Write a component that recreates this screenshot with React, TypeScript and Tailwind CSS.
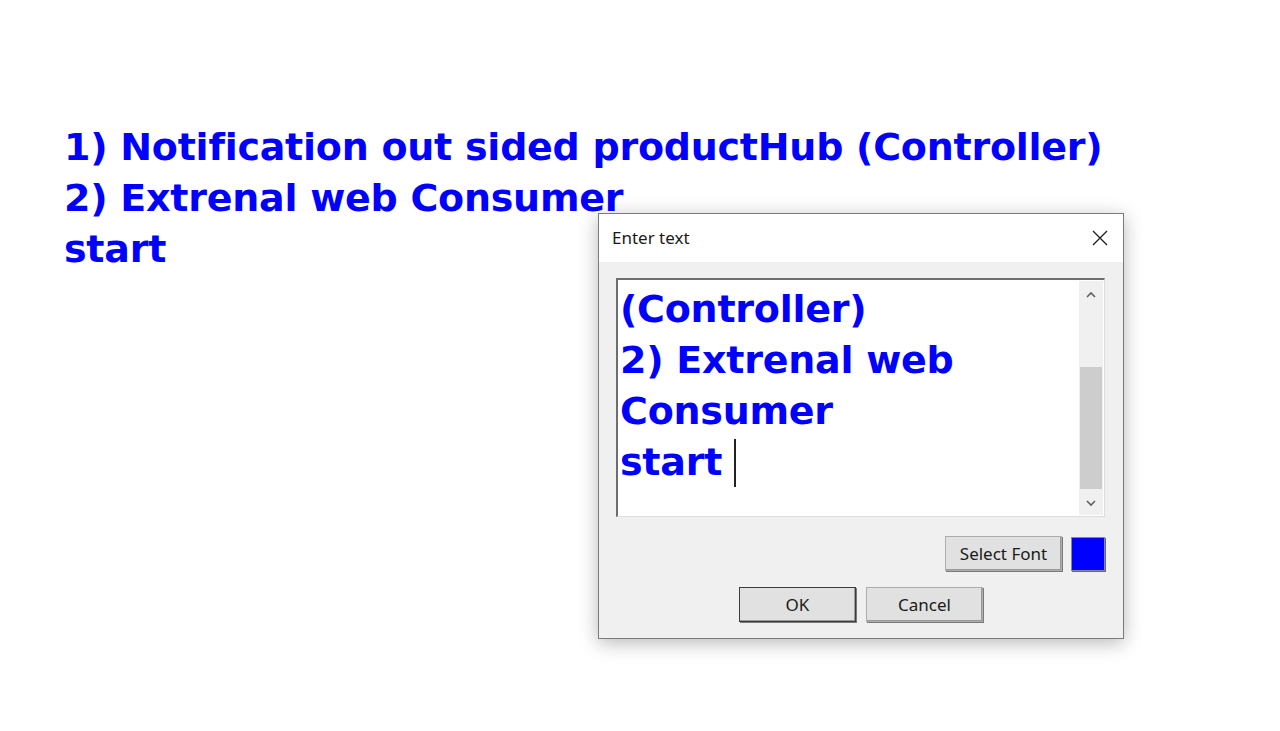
import React from 'react';

const blueText = "font-['DejaVu_Sans',Verdana,sans-serif] font-bold text-[#0000ff] text-[38px] leading-[51px] tracking-[-0.25px]";
const uiText = "font-['Noto_Sans','Open_Sans',sans-serif] text-[17px] text-[#1a1a1a]";

const Chevron = ({ up }: { up?: boolean }) => (
  <svg width="10" height="7" viewBox="0 0 10 7" className="text-[#606060]">
    <path d={up ? 'M1 6 L5 2 L9 6' : 'M1 1 L5 5 L9 1'} fill="none" stroke="currentColor" strokeWidth="1.6" />
  </svg>
);

const WinButton = ({ label, isDefault = false, className = '' }: any) => (
  <button
    className={`h-[35px] w-[117px] bg-[#e1e1e1] border ${
      isDefault ? 'border-[#3c3c3c]' : 'border-[#adadad]'
    } shadow-[inset_-1px_-1px_0_#9a9a9a,1px_1px_0_#7a7a7a] ${uiText} ${className}`}
  >
    {label}
  </button>
);

const EnterTextDialog = () => (
  <div className="absolute left-[598px] top-[213px] w-[526px] h-[426px] border border-[#7a7a7a] bg-[#f0f0f0] shadow-[0_4px_18px_rgba(0,0,0,0.28)] flex flex-col">
    <div className="h-[48px] bg-white flex items-center justify-between pl-[13px] pr-[15px]">
      <span className={uiText}>Enter text</span>
      <svg width="16" height="16" viewBox="0 0 16 16">
        <path d="M1 1 L15 15 M15 1 L1 15" stroke="#222" strokeWidth="1.4" />
      </svg>
    </div>

    <div className="flex-1 px-[17px] pt-[16px] flex flex-col">
      <div className="h-[239px] w-[489px] bg-white border-t-2 border-l-2 border-[#6e6e6e] border-r border-b border-r-[#dcdcdc] border-b-[#dcdcdc] flex">
        <div className={`flex-1 pl-[2px] pt-[4px] ${blueText}`}>
          <div>(Controller)</div>
          <div>2) Extrenal web</div>
          <div>Consumer</div>
          <div className="flex items-center">
            start
            <span className="ml-[12px] inline-block w-[2px] h-[48px] bg-[#222]" />
          </div>
        </div>
        <div className="w-[24px] bg-[#f0f0f0] mr-[1px] my-[1px] flex flex-col items-center">
          <div className="h-[26px] flex items-center justify-center">
            <Chevron up />
          </div>
          <div className="flex-1 w-full px-[1px] pt-[60px] flex flex-col">
            <div className="h-[122px] w-full bg-[#cdcdcd]" />
            <div className="flex-1" />
          </div>
          <div className="h-[24px] flex items-center justify-center">
            <Chevron />
          </div>
        </div>
      </div>

      <div className="mt-[19px] flex justify-end items-center gap-[9px] pr-[1px]">
        <WinButton label="Select Font" />
        <div className="w-[34px] h-[34px] bg-[#0000ff] border border-[#888] shadow-[1px_1px_0_#6a6a6a]" />
      </div>

      <div className="mt-[16px] flex justify-center gap-[10px]">
        <WinButton label="OK" isDefault />
        <WinButton label="Cancel" />
      </div>
    </div>
  </div>
);

export default function App() {
  return (
    <div className="relative w-full h-[731px] bg-white overflow-hidden">
      <div className={`pl-[64px] pt-[122px] ${blueText}`}>
        <div>1) Notification out sided productHub (Controller)</div>
        <div>2) Extrenal web Consumer</div>
        <div>start</div>
      </div>
      <EnterTextDialog />
    </div>
  );
}
